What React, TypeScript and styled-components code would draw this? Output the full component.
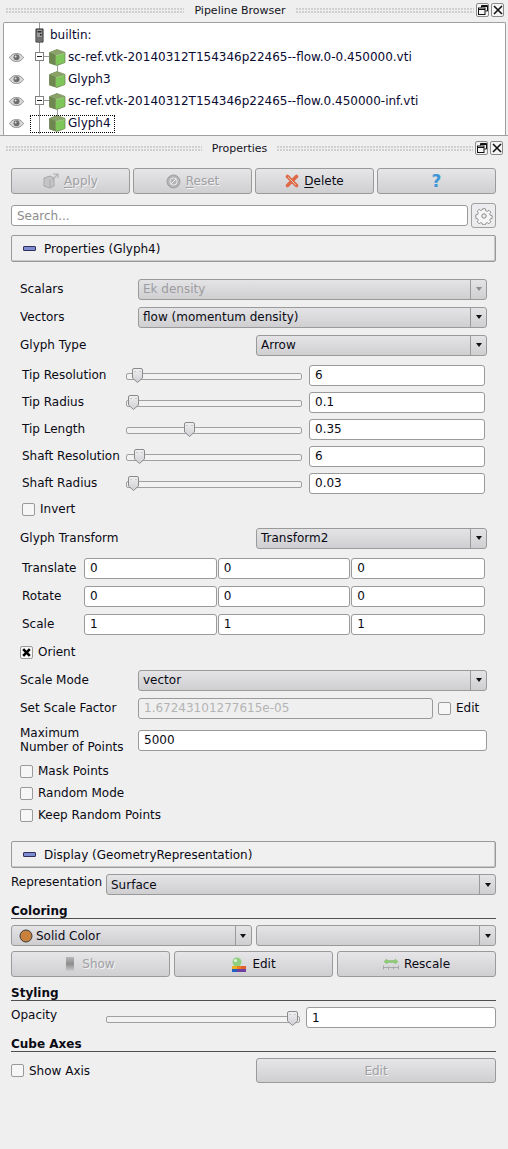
import React from "react";
import styled, { createGlobalStyle } from "styled-components";

const Global = createGlobalStyle`
  html, body { margin: 0; padding: 0; background: #efefef; }
  body { font-family: "DejaVu Sans", sans-serif; font-size: 12px; color: #0a0a14; }
  * { box-sizing: border-box; }
`;

const Page = styled.div`
  width: 508px; height: 1149px; background: #efefef; overflow: hidden;
  display: flex; flex-direction: column;
`;

const DockTitle = styled.div<{ $h: number; $pb: number; $pr: number }>`
  height: ${p => p.$h}px; display: flex; align-items: center;
  padding: 0 ${p => p.$pr}px ${p => p.$pb}px 6px; gap: 6px; color: #14141e; font-size: 11px;
`;
const Grip = styled.div`
  flex: 1; height: 5px;
  background-image: radial-gradient(circle at 1px 1px, #cfcfcf 1px, transparent 1.2px);
  background-size: 3px 3px;
`;
const TitleText = styled.span` padding: 0 4px; `;
const DockBtn = styled.div`
  width: 13px; height: 14px; border: 1px solid #8a8a8a; border-radius: 2px; background: #f4f4f4;
  display: flex; align-items: center; justify-content: center; margin-left: -4px;
`;

const Tree = styled.div`
  margin: 0 2px 0 3px; width: 503px; height: 113px; background: #fff; padding-top: 1px;
  border: 1px solid #a0a0a0; border-bottom: none; border-radius: 2px 2px 0 0; overflow: hidden;
  position: relative;
`;
const TreeRow = styled.div`
  height: 22px; display: flex; align-items: center; position: relative; white-space: nowrap; font-size: 12px; color: #0a0a32;
`;
const EyeSlot = styled.div` width: 25px; padding-left: 5px; display: flex; `;
const Guide = styled.div<{ $stub?: boolean }>`
  width: 20px; position: relative; align-self: stretch; flex: none;
  &::before { content: ""; position: absolute; left: 10px; top: -1px; bottom: 0; width: 1px; background: #999; }
  ${p => p.$stub && `&::after { content: ""; position: absolute; left: 28px; top: -2px; height: 5px; width: 1px; background: #999; }`}
`;
const Expander = styled.div`
  position: absolute; left: 6px; top: 6px; width: 9px; height: 9px; background: #fff; border: 1px solid #808080;
  &::after { content: ""; position: absolute; left: 1px; top: 3px; width: 5px; height: 1px; background: #222; }
  &::before { content: ""; position: absolute; left: 8px; top: 3px; width: 5px; height: 1px; background: #999; }
`;
const NodeText = styled.span<{ $left: number }>` margin-left: ${p => p.$left}px; `;
const IconBox = styled.span<{ $ml?: number }>` margin-left: ${p => p.$ml ?? 0}px; display: inline-flex; position: relative; `;
const Focus = styled.div`
  position: absolute; left: 26px; top: 92px; width: 85px; height: 18px; border: 1px dotted #000;
`;

const Divider = styled.div` height: 1px; background: #a0a0a0; `;

const Panel = styled.div` padding: 0 12px 0 11px; display: flex; flex-direction: column; flex: 1; `;

const BtnRow = styled.div<{ $cols: number; $gap?: number; $mt?: number }>`
  display: grid; grid-template-columns: repeat(${p => p.$cols}, 1fr); gap: ${p => p.$gap ?? 3}px; margin-top: ${p => p.$mt ?? 0}px;
`;
const Btn = styled.div<{ $off?: boolean; $h?: number }>`
  height: ${p => p.$h ?? 26}px; border: 1px solid #9a9a9a; border-radius: 3px;
  background: linear-gradient(#e6e6e8, #cfcfd2);
  display: flex; align-items: center; justify-content: center; gap: 5px;
  color: ${p => (p.$off ? "#a0a0a4" : "#0a0a14")};
  text-shadow: ${p => (p.$off ? "1px 1px 0 #f4f4f4" : "none")};
  u { text-underline-offset: 2px; }
`;
const HelpGlyph = styled.span` color: #3c96d8; font-size: 17px; font-weight: 700; `;
const ShowLabel = styled.span` margin-left: 3px; `;

const SearchRow = styled.div` display: flex; gap: 3px; margin-top: 9px; align-items: center; `;
const Input = styled.div<{ $off?: boolean; $ph?: boolean }>`
  height: 21px; flex: 1; min-width: 0; border: 1px solid #9a9a9a; border-radius: 3px; padding: 0 5px;
  background: ${p => (p.$off ? "#efefef" : "#fff")};
  color: ${p => (p.$off ? "#b4b4b4" : p.$ph ? "#8c8c8c" : "#0a0a14")};
  display: flex; align-items: center; white-space: nowrap; overflow: hidden;
`;
const Gear = styled.div`
  width: 25px; height: 25px; border: 1px solid #a0a0a0; border-radius: 3px; background: #ececee;
  display: flex; align-items: center; justify-content: center;
`;
const Section = styled.div<{ $mt: number }>`
  height: 27px; margin-top: ${p => p.$mt}px; border: 1px solid #9a9a9a; border-radius: 2px; background: #f0f0f0;
  display: flex; align-items: center; padding-left: 11px; gap: 8px; box-shadow: inset -1px -1px 0 #c8c8c8;
`;
const Minus = styled.span`
  width: 13px; height: 5px; background: #7c8cd0; border: 1px solid #30305a; border-radius: 1px;
`;

const Props = styled.div` padding: 0 9px 0 9px; display: flex; flex-direction: column; `;
const Row = styled.div<{ $h?: number; $mt?: number; $left?: number }>`
  display: flex; align-items: center; height: ${p => p.$h ?? 22}px; margin-top: ${p => p.$mt ?? 0}px;
  padding-left: ${p => p.$left ?? 0}px;
`;
const Label = styled.span<{ $w: number; $up?: boolean }>`
  width: ${p => p.$w}px; flex: none; line-height: 14px; white-space: pre-line;
  padding-bottom: ${p => (p.$up ? 6 : 0)}px;
`;
const Combo = styled.div<{ $off?: boolean }>`
  height: 21px; flex: 1; min-width: 0;
  border: 1px solid #9a9a9a; border-radius: 3px;
  background: linear-gradient(#e4e4e6, #cfcfd2);
  display: flex; align-items: stretch;
  color: ${p => (p.$off ? "#9c9ca0" : "#0a0a14")};
`;
const ComboText = styled.span` flex: 1; padding-left: 4px; display: flex; align-items: center; gap: 3px; overflow: hidden; white-space: nowrap; `;
const Dot = styled.span` margin-left: 3px; display: inline-flex; `;
const ComboArrow = styled.span<{ $off?: boolean }>`
  width: 16px; border-left: 1px solid #9a9a9a; display: flex; align-items: center; justify-content: center;
  &::after {
    content: ""; border-left: 3.5px solid transparent; border-right: 3.5px solid transparent;
    border-top: 4px solid ${p => (p.$off ? "#8c8c8c" : "#111")};
  }
`;
const SliderBox = styled.div<{ $w: number }>`
  width: ${p => p.$w}px; flex: none; height: 16px; position: relative;
  &::before {
    content: ""; position: absolute; left: 0; right: 0; top: 6px; height: 5px;
    border: 1px solid #a0a0a0; border-radius: 2px; background: #f2f2f2;
  }
`;
const ThumbWrap = styled.div`
  position: absolute; top: 1px; width: 11px; height: 15px; display: flex;
`;
const NumInput = styled(Input)<{ $w: number; $ml?: number }>`
  flex: none; width: ${p => p.$w}px; margin-left: ${p => p.$ml ?? 0}px; padding: 0 5px;
`;
const Triple = styled.div` flex: 1; display: grid; grid-template-columns: repeat(3, 1fr); margin-right: 2px; `;
const TripleInput = styled(Input)` margin-right: 1px; &:last-child { margin-right: 0; } `;
const Box = styled.span<{ $ml?: number }>`
  width: 13px; height: 13px; flex: none; border: 1px solid #9a9a9a; border-radius: 2px; background: #f6f6f6;
  display: inline-flex; align-items: center; justify-content: center; margin-right: 5px;
  margin-left: ${p => p.$ml ?? 0}px;
`;
const GroupTitle = styled.div<{ $mt: number }>`
  margin-top: ${p => p.$mt}px; height: 15px; font-weight: 700; line-height: 14px; border-bottom: 1px solid #505050;
`;
const AxisEdit = styled(Btn)` flex: 1; `;

const Eye = () => (
  <svg width="15" height="9" viewBox="0 0 15 9">
    <path d="M0.5 4.5C3 1 5 .5 7.5.5S12 1 14.5 4.5C12 8 10 8.5 7.5 8.5S3 8 .5 4.5Z" fill="#d8d8d8" stroke="#8c8c8c" />
    <circle cx="7.5" cy="4.3" r="3" fill="#6e6e6e" />
    <circle cx="6.6" cy="3.5" r="1" fill="#dedede" />
  </svg>
);
const Cube = () => (
  <svg width="17" height="17" viewBox="0 0 17 17">
    <path d="M.5 3.500 8 .5 16 3.500V13.500L8 16.500 .5 14Z" fill="#7f9a5c" stroke="#66804c" strokeWidth=".7" />
    <path d="M.5 3.500 6 5.500V16L.5 14Z" fill="#6e8650" />
    <path d="M.5 3.500 8 .5 16 3.500 7 6Z" fill="#8aa268" />
    <path d="M7 6.500 15.500 4.500V13.500L7 16Z" fill="#7ec65a" />
    <path d="M7 6.500 15.500 4.500" stroke="#a4d088" strokeWidth=".8" />
  </svg>
);
const Server = () => (
  <svg width="9" height="15" viewBox="0 0 9 15">
    <rect x=".5" y=".5" width="8" height="14" rx="1" fill="#1c1c1c" />
    <rect x="1.500" y="1.500" width="6" height="12" fill="#9a9a9a" />
    <rect x="2.500" y="3" width="4" height="1.500" fill="#2c2c2c" />
    <rect x="5" y="6" width="1.500" height="1.500" fill="#1c1c1c" />
    <rect x="1.500" y="9" width="6" height="4.500" fill="#6e6e6e" />
  </svg>
);
const Restore = () => (
  <svg width="10" height="10" viewBox="0 0 10 10" fill="none" stroke="#111">
    <path d="M3.500 2.500V.5H9.500V6H7.500" />
    <rect x=".5" y="3" width="6.500" height="6.500" />
    <path d="M.5 4.500H7M3.500 1.500H9.500" />
  </svg>
);
const Close = () => (
  <svg width="10" height="10" viewBox="0 0 10 10" stroke="#111" strokeWidth="1.600"><path d="M1 1 9 9M9 1 1 9" /></svg>
);
const ApplyIcon = () => (
  <svg width="16" height="16" viewBox="0 0 16 16">
    <path d="M1 5 7 3 11 5V13L7 15 1 13Z" fill="#c4c4c6" stroke="#a8a8aa" />
    <path d="M7 7V15" stroke="#a8a8aa" />
    <path d="M10 1H15V5M15 1 9 7" stroke="#b0b0b2" fill="none" strokeWidth="1.200" />
  </svg>
);
const ResetIcon = () => (
  <svg width="15" height="15" viewBox="0 0 15 15">
    <circle cx="7.500" cy="7.500" r="6.500" fill="#b4b4b6" stroke="#a0a0a2" />
    <circle cx="7.500" cy="7.500" r="3.600" fill="none" stroke="#ececec" />
    <path d="M5 10 10 5" stroke="#ececec" />
  </svg>
);
const DeleteIcon = () => (
  <svg width="14" height="14" viewBox="0 0 14 14">
    <path d="M2.500 2.500 11.500 11.500M11.500 2.500 2.500 11.500" stroke="#e06a48" strokeWidth="3.600" strokeLinecap="round" />
    <path d="M3 3 11 11" stroke="#d8c8b0" strokeWidth="1" />
  </svg>
);
const GearIcon = () => (
  <svg width="18" height="18" viewBox="0 0 18 18" fill="#f6f6f6" stroke="#8a8a8a">
    <path d="M7.500 1.500h3l.4 2.200 1.600.7 1.900-1.200 2 2-1.200 1.900.7 1.600 2 .4v2.800l-2 .5-.7 1.600 1.200 1.800-2 2-1.900-1.200-1.600.7-.4 1.600h-3l-.4-1.600-1.600-.7-1.900 1.200-2-2 1.200-1.800-.7-1.600-2-.5V8.100l2-.4.7-1.600-1.200-1.900 2-2 1.900 1.200 1.600-.7z" transform="scale(.92) translate(.8 .4)" />
    <circle cx="9" cy="9" r="2.200" fill="#efefef" />
  </svg>
);
const ColorDot = () => (
  <svg width="14" height="14" viewBox="0 0 14 14"><circle cx="7" cy="7" r="6" fill="#c8803c" stroke="#3c3c3c" /></svg>
);
const ShowIcon = () => (
  <svg width="8" height="14" viewBox="0 0 8 14">
    <defs><linearGradient id="sg" x1="0" x2="0" y1="0" y2="1"><stop offset="0" stopColor="#b8b8b8" /><stop offset=".5" stopColor="#8c8c8c" /><stop offset="1" stopColor="#cccccc" /></linearGradient></defs>
    <rect width="8" height="14" fill="url(#sg)" />
  </svg>
);
const EditIcon = () => (
  <svg width="16" height="15" viewBox="0 0 16 15">
    <circle cx="6" cy="5" r="4.500" fill="#8ed080" />
    <circle cx="4.500" cy="3.500" r="1.500" fill="#e4f6de" />
    <rect x="1" y="9" width="5" height="3" fill="#e8b020" />
    <rect x="6" y="9" width="4" height="3" fill="#e88020" />
    <rect x="10" y="9" width="5" height="3" fill="#e06030" />
    <rect x="1" y="12" width="5" height="3" fill="#2060c0" />
    <rect x="6" y="12" width="9" height="3" fill="#7040a0" />
  </svg>
);
const RescaleIcon = () => (
  <svg width="16" height="12" viewBox="0 0 16 12">
    <path d="M1 3.500 4 1V2.500H12V1L15 3.500 12 6V4.500H4V6Z" fill="#8ed070" stroke="#70a860" strokeWidth=".4" />
    <path d="M0 9.500H16M.5 7.500V11.500M5.500 8.500V11.500M10.500 8.500V11.500M15.500 7.500V11.500" stroke="#a8a8a8" fill="none" />
  </svg>
);
const ThumbIcon = () => (
  <svg width="11" height="15" viewBox="0 0 11 15">
    <defs><linearGradient id="tg" x1="0" x2="0" y1="0" y2="1"><stop offset="0" stopColor="#f0f0f2" /><stop offset="1" stopColor="#cfcfd4" /></linearGradient></defs>
    <path d="M2 .5H9Q10.500.5 10.500 2V10L5.500 14.500 .5 10V2Q.5.5 2 .5Z" fill="url(#tg)" stroke="#8a8a8a" />
    <path d="M3 3V4M8 3V4" stroke="#a8a8a8" />
  </svg>
);
const CrossIcon = () => (
  <svg width="9" height="9" viewBox="0 0 9 9"><path d="M1.200 1.200 7.800 7.800M7.800 1.200 1.200 7.800" stroke="#000" strokeWidth="2.600" /></svg>
);

function Slider({ w, at }: { w: number; at: number }) {
  return (
    <SliderBox $w={w}>
      <ThumbWrap style={{ left: at }}><ThumbIcon /></ThumbWrap>
    </SliderBox>
  );
}

const sliders = [
  { l: "Tip Resolution", at: 6, v: "6", mt: 8 },
  { l: "Tip Radius", at: 2, v: "0.1", mt: 5 },
  { l: "Tip Length", at: 58, v: "0.35", mt: 5 },
  { l: "Shaft Resolution", at: 8, v: "6", mt: 5 },
  { l: "Shaft Radius", at: 2, v: "0.03", mt: 5 },
];

const triples = [
  { l: "Translate", v: "0", mt: 8 },
  { l: "Rotate", v: "0", mt: 6 },
  { l: "Scale", v: "1", mt: 6 },
];

export default function App() {
  return (
    <Page>
      <Global />
      <DockTitle $h={22} $pb={2} $pr={4}>
        <Grip />
        <TitleText>Pipeline Browser</TitleText>
        <Grip />
        <DockBtn><Restore /></DockBtn>
        <DockBtn><Close /></DockBtn>
      </DockTitle>
      <Tree>
        <TreeRow>
          <EyeSlot />
          <Guide />
          <IconBox $ml={-14}><Server /></IconBox>
          <NodeText $left={6}>builtin:</NodeText>
        </TreeRow>
        <TreeRow>
          <EyeSlot><Eye /></EyeSlot>
          <Guide><Expander /></Guide>
          <IconBox><Cube /></IconBox>
          <NodeText $left={2}>sc-ref.vtk-20140312T154346p22465--flow.0-0.450000.vti</NodeText>
        </TreeRow>
        <TreeRow>
          <EyeSlot><Eye /></EyeSlot>
          <Guide $stub />
          <IconBox><Cube /></IconBox>
          <NodeText $left={2}>Glyph3</NodeText>
        </TreeRow>
        <TreeRow>
          <EyeSlot><Eye /></EyeSlot>
          <Guide><Expander /></Guide>
          <IconBox><Cube /></IconBox>
          <NodeText $left={2}>sc-ref.vtk-20140312T154346p22465--flow.0.450000-inf.vti</NodeText>
        </TreeRow>
        <TreeRow>
          <EyeSlot><Eye /></EyeSlot>
          <Guide $stub />
          <IconBox><Cube /></IconBox>
          <NodeText $left={2}>Glyph4</NodeText>
        </TreeRow>
        <Focus />
      </Tree>
      <Divider />
      <DockTitle $h={25} $pb={1} $pr={5}>
        <Grip />
        <TitleText>Properties</TitleText>
        <Grip />
        <DockBtn><Restore /></DockBtn>
        <DockBtn><Close /></DockBtn>
      </DockTitle>
      <Panel>
        <BtnRow $cols={4} $mt={7}>
          <Btn $off><ApplyIcon /><span><u>A</u>pply</span></Btn>
          <Btn $off><ResetIcon /><span><u>R</u>eset</span></Btn>
          <Btn><DeleteIcon /><span><u>D</u>elete</span></Btn>
          <Btn><HelpGlyph>?</HelpGlyph></Btn>
        </BtnRow>
        <SearchRow>
          <Input $ph>Search...</Input>
          <Gear><GearIcon /></Gear>
        </SearchRow>
        <Section $mt={7}><Minus />Properties (Glyph4)</Section>
        <Props>
          <Row $mt={16}>
            <Label $w={118}>Scalars</Label>
            <Combo $off><ComboText>Ek density</ComboText><ComboArrow $off /></Combo>
          </Row>
          <Row $mt={6}>
            <Label $w={118}>Vectors</Label>
            <Combo><ComboText>flow (momentum density)</ComboText><ComboArrow /></Combo>
          </Row>
          <Row $mt={6}>
            <Label $w={236}>Glyph Type</Label>
            <Combo><ComboText>Arrow</ComboText><ComboArrow /></Combo>
          </Row>
          {sliders.map(s => (
            <Row key={s.l} $mt={s.mt} $left={2}>
              <Label $w={104}>{s.l}</Label>
              <Slider w={176} at={s.at} />
              <NumInput $w={176} $ml={7}>{s.v}</NumInput>
            </Row>
          ))}
          <Row $mt={4} $left={2}><Box />Invert</Row>
          <Row $mt={7}>
            <Label $w={236}>Glyph Transform</Label>
            <Combo><ComboText>Transform2</ComboText><ComboArrow /></Combo>
          </Row>
          {triples.map(t => (
            <Row key={t.l} $mt={t.mt} $left={2}>
              <Label $w={62}>{t.l}</Label>
              <Triple>
                <TripleInput>{t.v}</TripleInput>
                <TripleInput>{t.v}</TripleInput>
                <TripleInput>{t.v}</TripleInput>
              </Triple>
            </Row>
          ))}
          <Row $mt={6}><Box><CrossIcon /></Box>Orient</Row>
          <Row $mt={6}>
            <Label $w={118}>Scale Mode</Label>
            <Combo><ComboText>vector</ComboText><ComboArrow /></Combo>
          </Row>
          <Row $mt={6}>
            <Label $w={118}>Set Scale Factor</Label>
            <NumInput $off $w={295}>1.67243101277615e-05</NumInput>
            <Box $ml={5} />Edit
          </Row>
          <Row $mt={7} $h={28}>
            <Label $w={118}>{"Maximum\nNumber of Points"}</Label>
            <Input>5000</Input>
          </Row>
          <Row $mt={6}><Box />Mask Points</Row>
          <Row><Box />Random Mode</Row>
          <Row><Box />Keep Random Points</Row>
        </Props>
        <Section $mt={15}><Minus />Display (GeometryRepresentation)</Section>
        <Row $mt={6} $h={21}>
          <Label $w={95} $up>Representation</Label>
          <Combo><ComboText>Surface</ComboText><ComboArrow /></Combo>
        </Row>
        <GroupTitle $mt={9}>Coloring</GroupTitle>
        <BtnRow $cols={2} $gap={4} $mt={6}>
          <Combo><ComboText><Dot><ColorDot /></Dot>Solid Color</ComboText><ComboArrow /></Combo>
          <Combo><ComboText /><ComboArrow /></Combo>
        </BtnRow>
        <BtnRow $cols={3} $gap={4} $mt={5}>
          <Btn $off><ShowIcon /><ShowLabel>Show</ShowLabel></Btn>
          <Btn><EditIcon />Edit</Btn>
          <Btn><RescaleIcon />Rescale</Btn>
        </BtnRow>
        <GroupTitle $mt={9}>Styling</GroupTitle>
        <Row $mt={6} $h={21}>
          <Label $w={95} $up>Opacity</Label>
          <Slider w={194} at={181} />
          <NumInput $w={190} $ml={6}>1</NumInput>
        </Row>
        <GroupTitle $mt={9}>Cube Axes</GroupTitle>
        <Row $mt={6} $h={25}>
          <Box />
          <Label $w={227}>Show Axis</Label>
          <AxisEdit $off $h={25}>Edit</AxisEdit>
        </Row>
      </Panel>
    </Page>
  );
}
